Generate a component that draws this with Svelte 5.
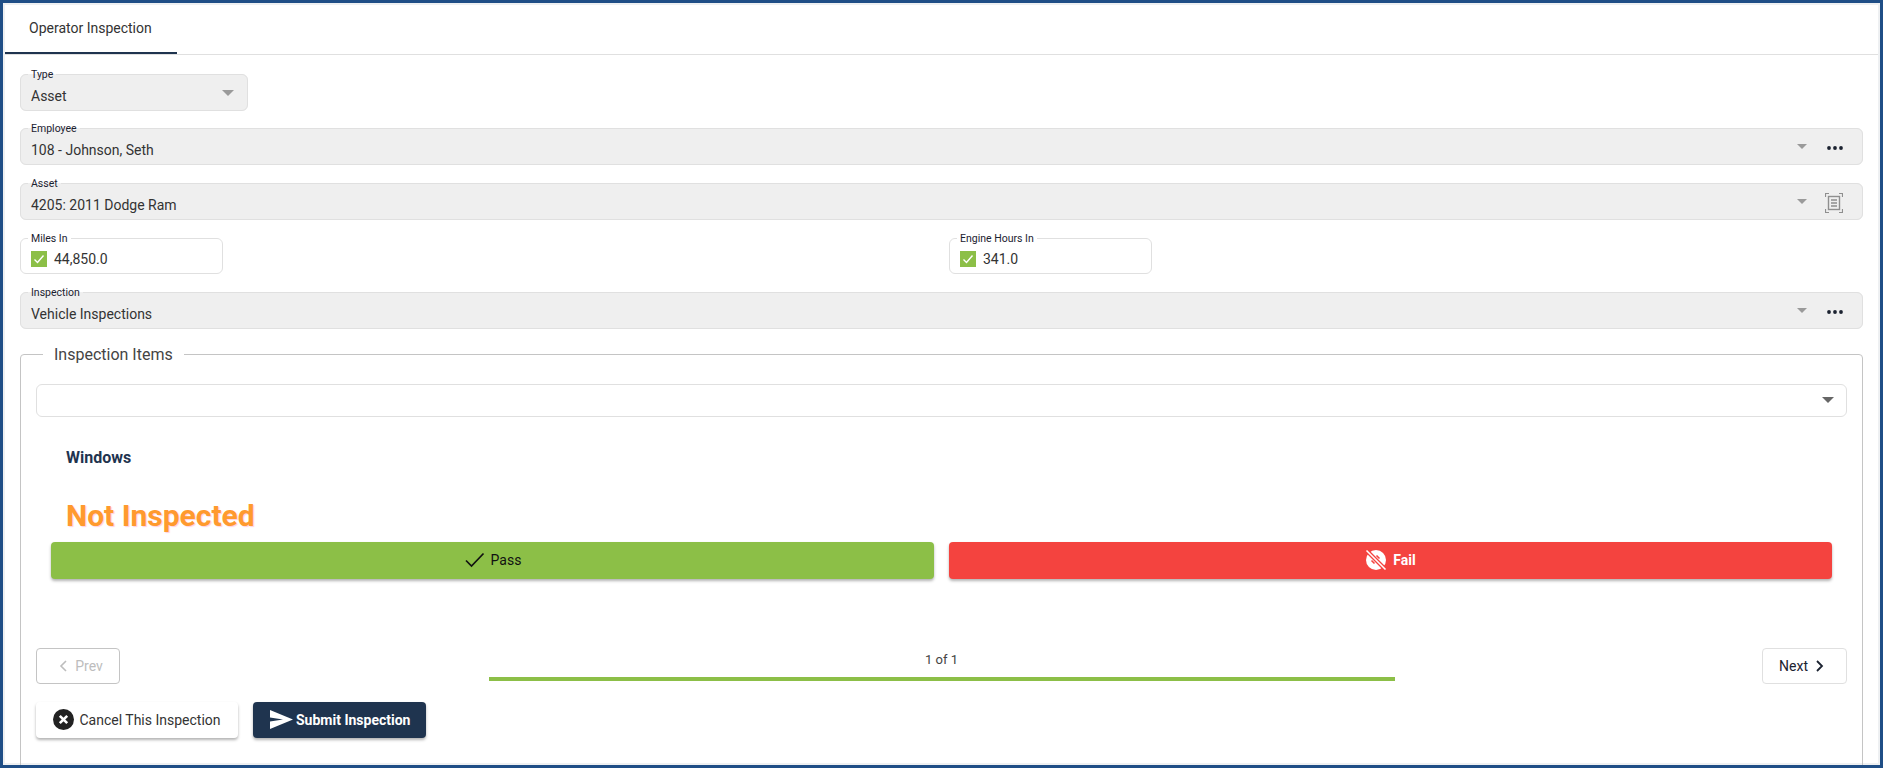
<script>
  let selects = [
    { label: 'Employee', value: '108 - Johnson, Seth', action: 'dots' },
    { label: 'Asset', value: '4205: 2011 Dodge Ram', action: 'scan' }
  ];
  let meters = [
    { label: 'Miles In', value: '44,850.0' },
    { label: 'Engine Hours In', value: '341.0' }
  ];
</script>

{#snippet caret(cls)}
  <svg class={cls} width="12" height="6" viewBox="0 0 12 6"><path d="M0 0h12L6 6z" fill="#9a9a9a" /></svg>
{/snippet}

{#snippet dots()}
  <svg class="action" width="16" height="4" viewBox="0 0 16 4" fill="#1b2230">
    <circle cx="2" cy="2" r="1.9" /><circle cx="8" cy="2" r="1.9" /><circle cx="14" cy="2" r="1.9" />
  </svg>
{/snippet}

{#snippet scan()}
  <svg class="action" width="18" height="20" viewBox="0 0 18 20" fill="none" stroke="#8f8f8f">
    <path d="M0.5 4V0.5H4M14 0.5h3.5V4M17.5 16v3.5H14M4 19.5H0.5V16" stroke-width="1.2" />
    <rect x="3.5" y="3.5" width="11" height="13" stroke-width="1.4" />
    <path d="M6 7h6M6 10h6M6 13h6" stroke-width="1.5" />
  </svg>
{/snippet}

{#snippet checkbox()}
  <svg class="check" width="16" height="16" viewBox="0 0 16 16">
    <rect width="16" height="16" fill="#8cbf47" />
    <path d="M3.5 8.5l3 3 6-7" fill="none" stroke="#fff" stroke-width="1.4" />
  </svg>
{/snippet}

<div class="frame">
  <div class="tabs">
    <div class="tab">Operator Inspection</div>
  </div>

  <div class="form">
    <fieldset class="field filled type">
      <legend>Type</legend>
      <div class="inner">
        <span class="value">Asset</span>
        {@render caret('caret-type')}
      </div>
    </fieldset>

    {#each selects as s}
      <fieldset class="field filled">
        <legend>{s.label}</legend>
        <div class="inner">
          <span class="value">{s.value}</span>
          <svg class="caret-small" width="10" height="5" viewBox="0 0 10 5"><path d="M0 0h10L5 5z" fill="#9a9a9a" /></svg>
          <span class="action-box">
            {#if s.action === 'dots'}{@render dots()}{:else}{@render scan()}{/if}
          </span>
        </div>
      </fieldset>
    {/each}

    <div class="meters">
      {#each meters as m}
        <fieldset class="field meter">
          <legend>{m.label}</legend>
          <div class="inner">
            {@render checkbox()}
            <span class="value">{m.value}</span>
          </div>
        </fieldset>
      {/each}
    </div>

    <fieldset class="field filled">
      <legend>Inspection</legend>
      <div class="inner">
        <span class="value">Vehicle Inspections</span>
        <svg class="caret-small" width="10" height="5" viewBox="0 0 10 5"><path d="M0 0h10L5 5z" fill="#9a9a9a" /></svg>
        <span class="action-box">{@render dots()}</span>
      </div>
    </fieldset>

    <fieldset class="items">
      <legend>Inspection Items</legend>

      <div class="item-select">
        <svg width="12" height="6" viewBox="0 0 12 6"><path d="M0 0h12L6 6z" fill="#666" /></svg>
      </div>

      <div class="item-name">Windows</div>
      <div class="status">Not Inspected</div>

      <div class="verdict">
        <button class="pass">
          <svg width="20" height="16" viewBox="0 0 20 16" fill="none" stroke="#111" stroke-width="1.7"><path d="M1 8.5l5.5 5.5L18.500 1.500" /></svg>
          Pass
        </button>
        <button class="fail">
          <svg width="22" height="22" viewBox="0 0 22 22">
            <circle cx="11" cy="11" r="10" fill="#fff" />
            <path d="M1.500 1.500L20.500 20.500" stroke="#f4433f" stroke-width="4" />
            <path d="M1.500 1.500L20.500 20.500" stroke="#fff" stroke-width="1.600" />
            <path d="M6.500 11.500l3 3M11.500 6.500l3 3" stroke="#f4433f" stroke-width="1.500" />
          </svg>
          Fail
        </button>
      </div>

      <div class="pager">
        <div class="pager-side">
          <button class="page-btn prev">
            <svg width="8" height="12" viewBox="0 0 8 12" fill="none" stroke="#bdbdbd" stroke-width="1.600"><path d="M7 1L2 6l5 5" /></svg>
            Prev
          </button>
        </div>
        <div class="progress">
          <div class="count">1 of 1</div>
          <div class="bar"></div>
        </div>
        <div class="pager-side right">
          <button class="page-btn next">
            Next
            <svg width="8" height="12" viewBox="0 0 8 12" fill="none" stroke="#1b2230" stroke-width="1.800"><path d="M1 1l5 5-5 5" /></svg>
          </button>
        </div>
      </div>

      <div class="actions">
        <button class="cancel">
          <svg width="21" height="21" viewBox="0 0 21 21">
            <circle cx="10.500" cy="10.500" r="10.500" fill="#222" />
            <path d="M6.800 6.800l7.400 7.400M14.200 6.800l-7.400 7.400" stroke="#fff" stroke-width="2.600" />
          </svg>
          Cancel This Inspection
        </button>
        <button class="submit">
          <svg width="23" height="19" viewBox="0 0 23 19"><path d="M0 0l23 9.500L0 19V11.500L13 9.500 0 7.500z" fill="#fff" /></svg>
          Submit Inspection
        </button>
      </div>
    </fieldset>
  </div>
</div>

<style>
  :global(body) {
    margin: 0;
    background: #fff;
    font-family: Roboto, "Liberation Sans", sans-serif;
    color: #333;
  }

  .frame {
    box-sizing: border-box;
    height: 768px;
    overflow: hidden;
    border: 3px solid #1f4e86;
    box-shadow: inset 0 0 0 2px #eef0f2;
    padding: 2px;
  }

  .tabs {
    height: 49px;
    border-bottom: 1px solid #e0e0e0;
    display: flex;
  }

  .tab {
    width: 172px;
    box-sizing: border-box;
    height: 49px;
    padding-left: 24px;
    line-height: 47px;
    font-size: 14px;
    color: #333;
    border-bottom: 2px solid #1f344f;
  }

  .form {
    padding: 13px 15px 0;
    display: flex;
    flex-direction: column;
  }

  fieldset {
    margin: 0;
    min-width: 0;
  }

  .field {
    box-sizing: border-box;
    border: 1px solid #e0e0e0;
    border-radius: 6px;
    padding: 0 10px;
    margin-bottom: 12px;
  }

  .field legend {
    font-size: 10.5px;
    line-height: 13px;
    padding: 0 3px;
    margin-left: -3px;
    color: #1b2230;
  }

  .filled {
    background: #efefef;
  }

  .type {
    width: 228px;
    margin-bottom: 11px;
  }

  .inner {
    height: 29px;
    display: flex;
    align-items: center;
  }

  .value {
    font-size: 14px;
    flex: 1;
    color: #333;
  }

  .caret-type {
    margin: -6px 3px 0 0;
  }

  .caret-small {
    margin: -6px 0 0 0;
  }

  .action-box {
    width: 45px;
    display: flex;
    justify-content: flex-end;
    align-items: center;
    padding-right: 9px;
    box-sizing: border-box;
    margin-top: -4px;
  }

  .meters {
    display: grid;
    grid-template-columns: 1fr 1fr;
    column-gap: 15px;
  }

  .meter {
    width: 203px;
  }

  .meter .inner {
    height: 28px;
    gap: 7px;
  }

  .check {
    flex: none;
  }

  .items {
    box-sizing: border-box;
    height: 500px;
    border: 1px solid #c4c4c4;
    border-radius: 4px;
    padding: 20px 15px 0;
    margin-top: 3.500px;
  }

  .items legend {
    font-size: 16px;
    line-height: 19px;
    padding: 0 11px;
    margin-left: 7px;
    color: #444;
  }

  .item-select {
    box-sizing: border-box;
    height: 33px;
    border: 1px solid #e0e0e0;
    border-radius: 6px;
    display: flex;
    justify-content: flex-end;
    align-items: center;
    padding-right: 12px;
  }

  .item-name {
    margin: 32px 0 0 30px;
    font-size: 16px;
    font-weight: 700;
    line-height: 18px;
    color: #1f344f;
  }

  .status {
    margin: 29px 0 0 30px;
    font-size: 30px;
    font-weight: 700;
    line-height: 40px;
    color: #ff9a2e;
    text-shadow: 1px 1px 1px rgba(255, 120, 160, 0.35);
  }

  button {
    font-family: inherit;
    display: inline-flex;
    align-items: center;
    justify-content: center;
    cursor: pointer;
    box-sizing: border-box;
  }

  .verdict {
    margin: 6px 15px 0;
    display: grid;
    grid-template-columns: 1fr 1fr;
    column-gap: 15px;
  }

  .pass,
  .fail {
    height: 37px;
    border: none;
    border-radius: 4px;
    font-size: 14px;
    gap: 6px;
    box-shadow: 0 2px 3px rgba(0, 0, 0, 0.3);
  }

  .pass {
    background: #8cbf47;
    color: #111;
    padding-left: 7px;
  }

  .fail {
    background: #f4433f;
    color: #fff;
    font-weight: 700;
  }

  .pager {
    margin-top: 69px;
    display: flex;
    align-items: flex-start;
  }

  .pager-side {
    flex: 1;
    display: flex;
  }

  .pager-side.right {
    justify-content: flex-end;
  }

  .page-btn {
    width: 84px;
    height: 36px;
    background: #fff;
    border-radius: 4px;
    font-size: 14px;
    gap: 8px;
  }

  .prev {
    border: 1px solid #c4c4c4;
    color: #bdbdbd;
    padding: 0 0 0 6px;
  }

  .next {
    width: 85px;
    border: 1px solid #e0e0e0;
    color: #1b2230;
    padding: 0 6px 0 0;
  }

  .progress {
    width: 906px;
    text-align: center;
  }

  .count {
    font-size: 13px;
    line-height: 16px;
    margin: 4px 0 9px;
    color: #444;
  }

  .bar {
    height: 4px;
    background: #8cbf47;
  }

  .actions {
    margin-top: 18px;
    display: flex;
    gap: 15px;
  }

  .cancel,
  .submit {
    height: 36px;
    border: none;
    border-radius: 4px;
    font-size: 14px;
    gap: 5px;
    box-shadow: 0 2px 3px rgba(0, 0, 0, 0.3);
  }

  .cancel {
    width: 202px;
    background: #fff;
    color: #333;
  }

  .submit {
    width: 173px;
    background: #1f344f;
    color: #fff;
    font-weight: 700;
    gap: 3px;
    justify-content: flex-start;
    padding: 0 0 0 17px;
  }
</style>
